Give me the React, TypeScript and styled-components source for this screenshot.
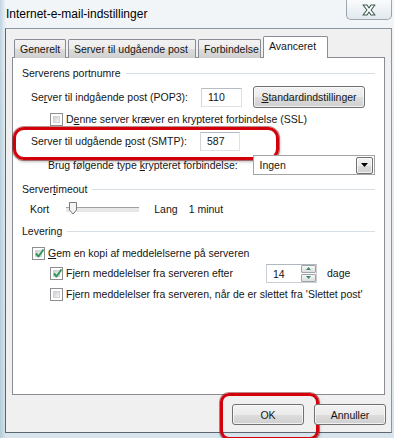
import React from "react";
import styled, { createGlobalStyle, css } from "styled-components";

const Global = createGlobalStyle`
  html, body { margin: 0; padding: 0; }
  body { width: 394px; height: 438px; overflow: hidden; background: #dfe8ef; }
  * { box-sizing: border-box; }
`;

const UI = `"Liberation Sans", Arial, sans-serif`;

const Window = styled.div`
  width: 394px;
  height: 438px;
  display: flex;
  flex-direction: column;
  font-family: ${UI};
  font-size: 10.5px;
  color: #151515;
  background:
    linear-gradient(90deg, rgba(150,185,205,0.55) 0px, rgba(255,255,255,0) 6px),
    linear-gradient(180deg, #f3f6f9 0%, #e6edf2 30%, #d8e4ec 100%);
`;

const TitleBar = styled.div`
  height: 28px;
  display: flex;
  align-items: flex-start;
`;

const Title = styled.div`
  padding: 7px 0 0 6px;
  font-size: 12px;
  color: #000;
`;

const CloseButton = styled.div`
  margin-left: auto;
  margin-right: 2px;
  width: 46px;
  height: 20px;
  border: 1px solid rgba(90, 100, 110, 0.55);
  border-top: none;
  border-radius: 0 0 5px 5px;
  background: linear-gradient(180deg, rgba(255,255,255,0.6), rgba(215,225,232,0.6));
  display: flex;
  align-items: center;
  justify-content: center;
`;

const Client = styled.div`
  flex: 1;
  margin: 0 2px 5px 5px;
  border: 1px solid #8a96a0;
  border-left-color: #5c6670;
  border-bottom-color: #5c6670;
  background: #f0f0f0;
  padding: 7px 0 0 6px;
  display: flex;
  flex-direction: column;
`;

const TabStrip = styled.div`
  display: flex;
  align-items: flex-end;
  gap: 2px;
  padding-left: 2px;
  height: 22px;
  margin-bottom: -1px;
  position: relative;
  z-index: 1;
`;

const Tab = styled.div<{ $w: number; $active?: boolean }>`
  width: ${(p) => p.$w}px;
  height: 19px;
  border: 1px solid #898c95;
  border-bottom: none;
  border-radius: 2px 2px 0 0;
  background: linear-gradient(180deg, #f3f3f3 0%, #ebebeb 50%, #dcdcdc 51%, #cfcfcf 100%);
  display: flex;
  align-items: center;
  padding-left: 5px;
  white-space: nowrap;
  ${(p) =>
    p.$active &&
    css`
      height: 22px;
      background: #fff;
      align-items: flex-start;
      padding-top: 3px;
    `}
`;

const Panel = styled.div`
  width: 373px;
  height: 338px;
  border: 1px solid #898c95;
  background: #fff;
  padding: 8px 9px 0 9px;
  display: flex;
  flex-direction: column;
`;

const GroupHeader = styled.div<{ $mt: number }>`
  margin-top: ${(p) => p.$mt}px;
  height: 14px;
  display: flex;
  align-items: center;
  white-space: nowrap;
  &::after {
    content: "";
    flex: 1;
    margin-left: 5px;
    border-top: 1px solid #d5dfe5;
  }
`;

const Row = styled.div<{ $mt?: number; $h?: number; $indent: number }>`
  margin-top: ${(p) => p.$mt ?? 0}px;
  height: ${(p) => p.$h ?? 22}px;
  padding-left: ${(p) => p.$indent}px;
  display: flex;
  align-items: center;
  white-space: nowrap;
  position: relative;
`;

const Highlight = styled(Row)`
  &::after {
    content: "";
    position: absolute;
    left: -9px;
    top: -3px;
    width: 260px;
    height: 27px;
    border: 3px solid #d3000c;
    border-radius: 11px;
    box-shadow: 0 0 0 1px rgba(110, 0, 0, 0.45), 1px 2px 3px rgba(0, 0, 0, 0.25);
    pointer-events: none;
  }
`;

const Label = styled.span<{ $w?: number; $ml?: number }>`
  display: inline-block;
  ${(p) => p.$w && `width: ${p.$w}px;`}
  ${(p) => p.$ml && `margin-left: ${p.$ml}px;`}
`;

const TextBox = styled.div<{ $w: number }>`
  width: ${(p) => p.$w}px;
  height: 19px;
  border: 1px solid #dfe3e8;
  border-top-color: #b5bcc3;
  border-left-color: #d0d5da;
  display: flex;
  align-items: center;
  padding-left: 6px;
  background: #fff;
`;

const buttonLook = css`
  border: 1px solid #707070;
  border-radius: 3px;
  background: linear-gradient(180deg, #f2f2f2 0%, #ebebeb 50%, #dddddd 51%, #cfcfcf 100%);
  box-shadow: inset 0 0 0 1px rgba(255, 255, 255, 0.7);
  display: flex;
  align-items: center;
  justify-content: center;
  font-family: ${UI};
  font-size: 10.5px;
  color: #151515;
`;

const PushButton = styled.div<{ $w: number; $h: number; $ml?: number }>`
  ${buttonLook};
  width: ${(p) => p.$w}px;
  height: ${(p) => p.$h}px;
  margin-left: ${(p) => p.$ml ?? 0}px;
  position: relative;
`;

const OkButton = styled(PushButton)`
  &::after {
    content: "";
    position: absolute;
    left: -13px;
    top: -12px;
    width: 93px;
    height: 41px;
    border: 3px solid #d3000c;
    border-radius: 9px;
    box-shadow: 0 0 0 1px rgba(110, 0, 0, 0.45), 1px 2px 3px rgba(0, 0, 0, 0.25);
  }
`;

const CheckBoxBox = styled.div`
  width: 13px;
  height: 13px;
  border: 1px solid #8f8f8f;
  background: #fff;
  padding: 2px;
  margin-right: 3px;
  flex: none;
  & > div {
    width: 100%;
    height: 100%;
    background: linear-gradient(135deg, #cbcfd5 0%, #f6f6f6 100%);
    border: 1px solid #d0d3d8;
    position: relative;
  }
`;

const CheckMark = styled.svg`
  position: absolute;
  left: -2px;
  top: -3px;
`;

const Select = styled.div`
  width: 124px;
  height: 20px;
  border: 1px solid #a5a5a5;
  display: flex;
  align-items: center;
  padding: 1px 1px 1px 5px;
  background: #fff;
`;

const DropButton = styled.div`
  ${buttonLook};
  margin-left: auto;
  width: 17px;
  height: 17px;
  border-radius: 2px;
`;

const Slider = styled.div`
  width: 73px;
  height: 12px;
  margin: 0 15px 0 17px;
  position: relative;
  &::before {
    content: "";
    position: absolute;
    left: 0;
    right: 0;
    top: 4px;
    height: 3px;
    border-top: 1px solid #a0a0a0;
    border-bottom: 1px solid #e5e5e5;
    background: #e8e8e8;
  }
`;

const Thumb = styled.svg`
  position: absolute;
  left: 2px;
  top: -1px;
`;

const Spinner = styled.div`
  width: 51px;
  height: 19px;
  border: 1px solid #c9cfd5;
  border-top-color: #b0b7be;
  display: flex;
  align-items: stretch;
  margin-left: 13px;
  margin-right: 10px;
  background: #fff;
`;

const SpinText = styled.div`
  flex: 1;
  display: flex;
  align-items: center;
  padding-left: 6px;
  padding-top: 2px;
`;

const SpinButtons = styled.div`
  width: 16px;
  display: flex;
  flex-direction: column;
  gap: 1px;
  padding: 0 0 0 1px;
`;

const SpinButton = styled.div`
  flex: 1;
  border: 1px solid #9ea4aa;
  border-radius: 1px;
  background: linear-gradient(180deg, #f6f6f6, #dedede);
  display: flex;
  align-items: center;
  justify-content: center;
`;

const Footer = styled.div`
  display: flex;
  justify-content: flex-end;
  gap: 10px;
  padding: 9px 5px 0 0;
`;

const U = styled.span`
  text-decoration: underline;
  text-underline-offset: 1px;
`;

function CheckBox({ checked }: { checked?: boolean }) {
  return (
    <CheckBoxBox>
      <div>
        {checked && (
          <CheckMark width="11" height="11" viewBox="0 0 11 11">
            <path d="M2 5.5 L4.5 8.5 L9.5 1.5" fill="none" stroke="#2f9a55" strokeWidth="2" strokeLinejoin="round" />
          </CheckMark>
        )}
      </div>
    </CheckBoxBox>
  );
}

export default function App() {
  return (
    <>
      <Global />
      <Window>
        <TitleBar>
          <Title>Internet-e-mail-indstillinger</Title>
          <CloseButton>
            <svg width="16" height="12" viewBox="0 0 16 12">
              <path
                d="M2 1 H6 L8 4 L10 1 H14 L10 6 L14 11 H10 L8 8 L6 11 H2 L6 6 Z"
                fill="#fff"
                stroke="#3c5a4a"
                strokeWidth="1.1"
                strokeLinejoin="round"
              />
            </svg>
          </CloseButton>
        </TitleBar>
        <Client>
          <TabStrip>
            <Tab $w={52}>Generelt</Tab>
            <Tab $w={128}>Server til udgående post</Tab>
            <Tab $w={63}>Forbindelse</Tab>
            <Tab $w={65} $active>Avanceret</Tab>
          </TabStrip>
          <Panel>
            <GroupHeader $mt={0}>Serverens portnumre</GroupHeader>
            <Row $mt={6} $indent={9}>
              <Label $w={170}>
                Se<U>r</U>ver til indgående post (POP3):
              </Label>
              <TextBox $w={41}>110</TextBox>
              <PushButton $w={112} $h={22} $ml={11}>
                <span>
                  <U>S</U>tandardindstillinger
                </span>
              </PushButton>
            </Row>
            <Row $indent={28}>
              <CheckBox />
              <Label>
                D<U>e</U>nne server kræver en krypteret forbindelse (SSL)
              </Label>
            </Row>
            <Highlight $indent={9}>
              <Label $w={169}>
                Server til udgående <U>p</U>ost (SMTP):
              </Label>
              <TextBox $w={40}>587</TextBox>
            </Highlight>
            <Row $mt={2} $indent={26}>
              <Label $w={210}>
                Brug følgende type <U>k</U>rypteret forbindelse:
              </Label>
              <Select>
                <span>Ingen</span>
                <DropButton>
                  <svg width="7" height="4" viewBox="0 0 7 4">
                    <path d="M0 0 H7 L3.5 4 Z" fill="#000" />
                  </svg>
                </DropButton>
              </Select>
            </Row>
            <GroupHeader $mt={6}>
              <span>
                Server<U>t</U>imeout
              </span>
            </GroupHeader>
            <Row $mt={2} $indent={8}>
              <Label>Kort</Label>
              <Slider>
                <Thumb width="10" height="13" viewBox="0 0 10 13">
                  <path d="M1.5 0.5 H8.5 V8 L5 12 L1.5 8 Z" fill="#f4f4f4" stroke="#7a7a7a" />
                </Thumb>
              </Slider>
              <Label>Lang</Label>
              <Label $ml={11}>1 minut</Label>
            </Row>
            <GroupHeader $mt={4}>Levering</GroupHeader>
            <Row $mt={5} $h={20} $indent={10}>
              <CheckBox checked />
              <Label>
                <U>G</U>em en kopi af meddelelserne på serveren
              </Label>
            </Row>
            <Row $h={20} $indent={28}>
              <CheckBox checked />
              <Label $w={187}>
                F<U>j</U>ern meddelelser fra serveren efter
              </Label>
              <Spinner>
                <SpinText>14</SpinText>
                <SpinButtons>
                  <SpinButton>
                    <svg width="5" height="3" viewBox="0 0 5 3">
                      <path d="M0 3 H5 L2.5 0 Z" fill="#3a8a6a" />
                    </svg>
                  </SpinButton>
                  <SpinButton>
                    <svg width="5" height="3" viewBox="0 0 5 3">
                      <path d="M0 0 H5 L2.5 3 Z" fill="#3a8a6a" />
                    </svg>
                  </SpinButton>
                </SpinButtons>
              </Spinner>
              <Label>dage</Label>
            </Row>
            <Row $mt={1} $h={20} $indent={28}>
              <CheckBox />
              <Label>
                F<U>j</U>ern meddelelser fra serveren, når de er slettet fra 'Slettet post'
              </Label>
            </Row>
          </Panel>
          <Footer>
            <OkButton $w={72} $h={21}>OK</OkButton>
            <PushButton $w={72} $h={21}>Annuller</PushButton>
          </Footer>
        </Client>
      </Window>
    </>
  );
}
